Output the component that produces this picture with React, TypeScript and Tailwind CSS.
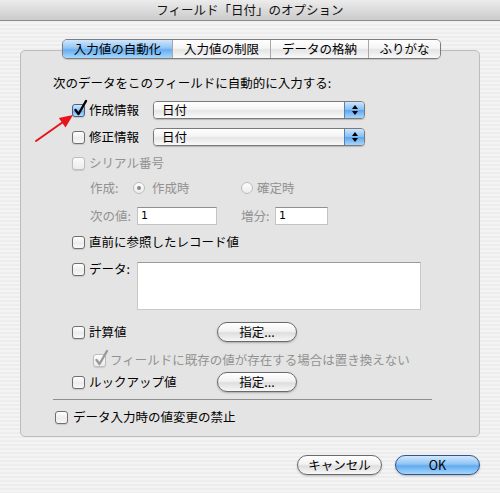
import React from 'react';

const FONT = 'font-["Noto_Sans_CJK_JP","Noto_Sans",sans-serif]';

function Check({ checked = false, disabled = false }: { checked?: boolean; disabled?: boolean }) {
  const box = checked && !disabled
    ? 'border-[#3d5f93] bg-[linear-gradient(to_bottom,#d6e9fc_0%,#8cc2f4_50%,#6aaef0_55%,#b6ddfb_100%)]'
    : disabled
      ? 'border-[#bdbdbd] bg-[linear-gradient(to_bottom,#fbfbfb,#ececec)]'
      : 'border-[#6f6f6f] bg-[linear-gradient(to_bottom,#ffffff_0%,#ececec_55%,#f8f8f8_100%)]';
  return (
    <span className={`relative inline-block w-[13px] h-[13px] shrink-0 rounded-[3px] border ${box} shadow-[0_1px_1px_rgba(0,0,0,0.12)]`}>
      {checked && (
        <svg className="absolute -top-[5px] left-[0px] overflow-visible" width="15" height="17" viewBox="0 0 15 17">
          <path
            d="M2.5 10 L5.5 14 L13 1"
            fill="none"
            stroke={disabled ? '#9a9a9a' : '#000'}
            strokeWidth="2.4"
            strokeLinecap="round"
            strokeLinejoin="round"
          />
        </svg>
      )}
    </span>
  );
}

function Radio({ on = false }: { on?: boolean }) {
  return (
    <span className="inline-flex items-center justify-center w-[12px] h-[12px] shrink-0 rounded-full border border-[#bdbdbd] bg-[linear-gradient(to_bottom,#fdfdfd,#ececec)]">
      {on && <span className="w-[4px] h-[4px] rounded-full bg-[#8a8a8a]" />}
    </span>
  );
}

function Popup({ value }: { value: string }) {
  return (
    <div className="flex w-[212px] h-[18px] rounded-[4px] border border-[#7a7a7a] overflow-hidden shadow-[0_1px_1px_rgba(0,0,0,0.2)]">
      <div className="flex-1 flex items-center pl-[8px] bg-[linear-gradient(to_bottom,#ffffff_0%,#f4f4f4_45%,#e6e6e6_55%,#fafafa_100%)]">
        {value}
      </div>
      <div className="w-[20px] flex flex-col items-center justify-center gap-[2px] border-l border-[#5a7fb5] bg-[linear-gradient(to_bottom,#cfe5fb_0%,#86bff4_48%,#5ea6ee_52%,#a9d6fb_100%)]">
        <span className="w-0 h-0 border-l-[3px] border-r-[3px] border-b-[4px] border-l-transparent border-r-transparent border-b-black" />
        <span className="w-0 h-0 border-l-[3px] border-r-[3px] border-t-[4px] border-l-transparent border-r-transparent border-t-black" />
      </div>
    </div>
  );
}

function PillButton({ label, w, blue = false }: { label: string; w: string; blue?: boolean }) {
  return (
    <div
      className={`${w} h-[20px] flex items-center justify-center rounded-full border ${
        blue
          ? 'border-[#34548d] bg-[linear-gradient(to_bottom,#d2e8fc_0%,#8ec4f5_45%,#62aaf0_55%,#a4d7fc_100%)]'
          : 'border-[#6a6a6a] bg-[linear-gradient(to_bottom,#ffffff_0%,#f2f2f2_45%,#dedede_55%,#f7f7f7_100%)]'
      } shadow-[0_1px_2px_rgba(0,0,0,0.25)]`}
    >
      {label}
    </div>
  );
}

function TextInput({ w, value }: { w: string; value: string }) {
  return (
    <div className={`${w} h-[18px] bg-white border border-[#c4c4c4] border-t-[#8f8f8f] flex items-center pl-[3px] text-[11px] text-black font-["DejaVu_Sans",sans-serif]`}>
      {value}
    </div>
  );
}

const tabs = [
  { label: '入力値の自動化', w: 'w-[109px]', active: true },
  { label: '入力値の制限', w: 'w-[98px]', active: false },
  { label: 'データの格納', w: 'w-[98px]', active: false },
  { label: 'ふりがな', w: 'w-[72px]', active: false },
];

export default function App() {
  return (
    <div
      className={`relative w-[500px] h-[493px] overflow-hidden text-[12.5px] leading-[16px] text-black ${FONT} bg-[repeating-linear-gradient(to_bottom,#ededed_0px,#ededed_2px,#f4f4f4_2px,#f4f4f4_4px)]`}
    >
      {/* title bar */}
      <div className="h-[21px] flex items-center justify-center border-b border-[#8c8c8c] bg-[linear-gradient(to_bottom,#ececec,#cbcbcb)] text-[#111]">
        フィールド「日付」のオプション
      </div>

      <div className="pt-[18px] px-[20px]">
        {/* tabs */}
        <div className="relative z-10 flex justify-center pl-[3px]">
          <div className="flex h-[20px] rounded-[5px] border border-[#7c7c7c] overflow-hidden shadow-[0_1px_1px_rgba(0,0,0,0.15)]">
            {tabs.map((t, i) => (
              <div
                key={t.label}
                className={`${t.w} flex items-center justify-center ${i > 0 ? 'border-l border-[#a8a8a8]' : ''} ${
                  t.active
                    ? 'bg-[linear-gradient(to_bottom,#d0e6fc_0%,#90c5f5_45%,#66adf0_55%,#a8d8fb_100%)]'
                    : 'bg-[linear-gradient(to_bottom,#ffffff_0%,#f5f5f5_45%,#e4e4e4_55%,#f9f9f9_100%)]'
                }`}
              >
                {t.label}
              </div>
            ))}
          </div>
        </div>

        {/* panel */}
        <div className="-mt-[9px] h-[387px] rounded-[5px] border border-[#bcbcbc] bg-[#e4e4e4] pl-[32px] pt-[24px] flex flex-col">
          <div className="h-[16px] flex items-center">次のデータをこのフィールドに自動的に入力する:</div>

          <div className="mt-[9px] h-[20px] flex items-center pl-[19px]">
            <Check checked />
            <span className="ml-[4px] w-[64px]">作成情報</span>
            <Popup value="日付" />
          </div>

          <div className="mt-[7px] h-[20px] flex items-center pl-[19px]">
            <Check />
            <span className="ml-[4px] w-[64px]">修正情報</span>
            <Popup value="日付" />
          </div>

          <div className="mt-[6px] h-[20px] flex items-center pl-[19px] text-[#929292]">
            <Check disabled />
            <span className="ml-[4px]">シリアル番号</span>
          </div>

          <div className="mt-[5px] h-[20px] flex items-center pl-[37px] text-[#929292]">
            <span className="w-[43px]">作成:</span>
            <div className="w-[108px] flex items-center">
              <Radio on />
              <span className="ml-[7px]">作成時</span>
            </div>
            <Radio />
            <span className="ml-[4px]">確定時</span>
          </div>

          <div className="mt-[8px] h-[20px] flex items-center pl-[37px] text-[#929292]">
            <span className="w-[47px]">次の値:</span>
            <TextInput w="w-[80px]" value="1" />
            <span className="ml-[24px] w-[34px]">増分:</span>
            <TextInput w="w-[53px]" value="1" />
          </div>

          <div className="mt-[6px] h-[20px] flex items-center pl-[19px]">
            <Check />
            <span className="ml-[4px]">直前に参照したレコード値</span>
          </div>

          <div className="mt-[10px] h-[48px] flex items-start pl-[19px]">
            <div className="h-[14px] flex items-center">
              <Check />
              <span className="ml-[4px] w-[48px]">データ:</span>
            </div>
            <div className="w-[284px] h-[48px] bg-white border border-[#c8c8c8] border-t-[#9a9a9a]" />
          </div>

          <div className="mt-[12px] h-[20px] flex items-center pl-[19px]">
            <Check />
            <span className="ml-[4px] w-[128px]">計算値</span>
            <PillButton label="指定..." w="w-[80px]" />
          </div>

          <div className="mt-[8px] h-[20px] flex items-center pl-[40px] text-[#929292]">
            <Check checked disabled />
            <span className="ml-[4px]">フィールドに既存の値が存在する場合は置き換えない</span>
          </div>

          <div className="mt-[2px] h-[20px] flex items-center pl-[19px]">
            <Check />
            <span className="ml-[4px] w-[128px]">ルックアップ値</span>
            <PillButton label="指定..." w="w-[80px]" />
          </div>

          <div className="mt-[7px] w-[379px] h-[1px] bg-[#8e8e8e]" />

          <div className="mt-[7px] h-[20px] flex items-center pl-[2px]">
            <Check />
            <span className="ml-[5px]">データ入力時の値変更の禁止</span>
          </div>
        </div>

        {/* buttons */}
        <div className="mt-[18px] flex justify-end gap-[13px]">
          <PillButton label="キャンセル" w="w-[85px]" />
          <PillButton label="OK" w="w-[85px]" blue />
        </div>
      </div>

      {/* red annotation arrow */}
      <svg className="absolute left-0 top-0 pointer-events-none" width="500" height="493" viewBox="0 0 500 493">
        <line x1="36" y1="141" x2="63" y2="122" stroke="#e8141c" strokeWidth="2" strokeLinecap="round" />
        <polygon points="73,115 65.5,127.5 58.8,118" fill="#e8141c" />
      </svg>
    </div>
  );
}
